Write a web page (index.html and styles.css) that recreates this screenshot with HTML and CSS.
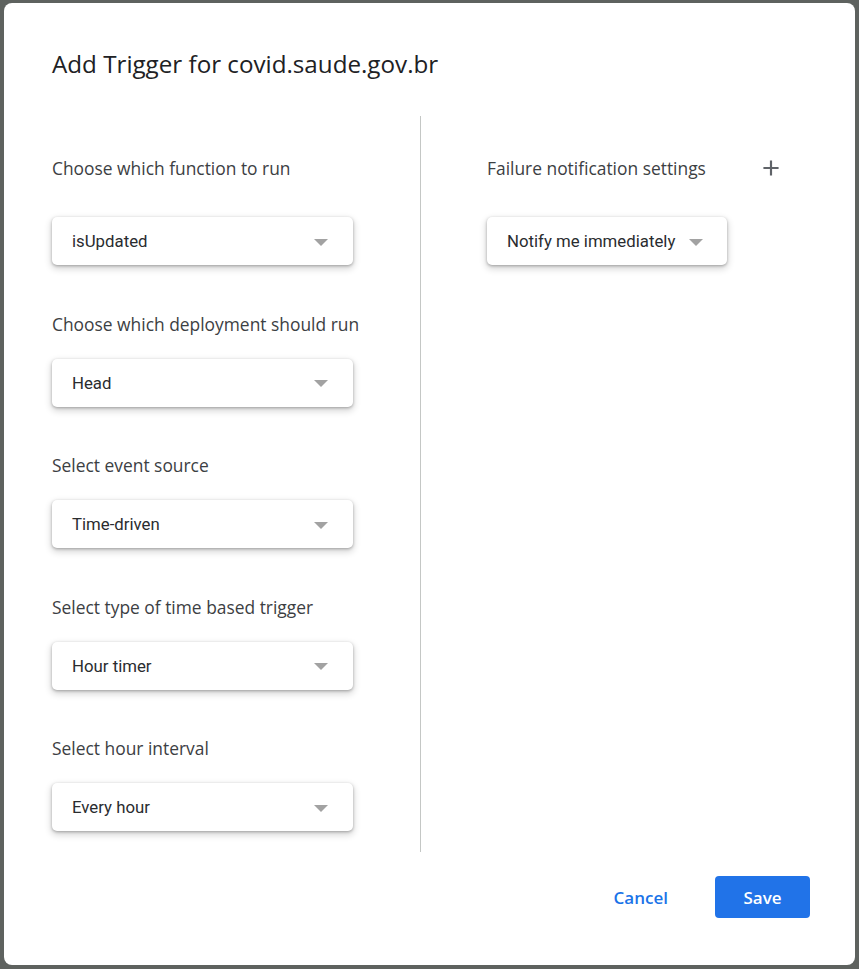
FILE: index.html
```html
<!DOCTYPE html>
<html lang="en">
<head>
<meta charset="utf-8">
<title>Add Trigger</title>
<link rel="stylesheet" href="styles.css">
</head>
<body>
<div class="dialog">
  <h1 class="title">Add Trigger for covid.saude.gov.br</h1>
  <div class="content">
    <div class="col col-left">
      <div class="field field-first">
        <div class="label">Choose which function to run</div>
        <div class="select"><span class="value">isUpdated</span><span class="arrow"></span></div>
      </div>
      <div class="field">
        <div class="label">Choose which deployment should run</div>
        <div class="select"><span class="value">Head</span><span class="arrow"></span></div>
      </div>
      <div class="field">
        <div class="label">Select event source</div>
        <div class="select"><span class="value">Time-driven</span><span class="arrow"></span></div>
      </div>
      <div class="field">
        <div class="label">Select type of time based trigger</div>
        <div class="select"><span class="value">Hour timer</span><span class="arrow"></span></div>
      </div>
      <div class="field">
        <div class="label">Select hour interval</div>
        <div class="select"><span class="value">Every hour</span><span class="arrow"></span></div>
      </div>
    </div>
    <div class="divider"></div>
    <div class="col col-right">
      <div class="field field-first">
        <div class="label-row">
          <div class="label">Failure notification settings</div>
          <span class="add-btn">
            <svg viewBox="0 0 24 24" width="26" height="26"><path d="M19 13h-6v6h-2v-6H5v-2h6V5h2v6h6v2z" fill="#5f6368"/></svg>
          </span>
        </div>
        <div class="select select-auto"><span class="value">Notify me immediately</span><span class="arrow"></span></div>
      </div>
    </div>
  </div>
  <div class="footer">
    <button class="btn btn-text">Cancel</button>
    <button class="btn btn-primary">Save</button>
  </div>
</div>
</body>
</html>
```
FILE: styles.css
```css
html, body {
  margin: 0;
  padding: 0;
}
body {
  background: #5e625f;
  padding: 3px 4px;
  width: 851px;
  height: 963px;
}
.dialog {
  width: 851px;
  height: 962px;
  background: #fff;
  border-radius: 8px;
  box-sizing: border-box;
  padding: 47px 0 0 48px;
  display: flex;
  flex-direction: column;
}
.title {
  margin: 0;
  font-family: "Open Sans", sans-serif;
  font-weight: 400;
  font-size: 24.2px;
  line-height: 28px;
  color: #202124;
}
.content {
  margin-top: 38px;
  display: flex;
  height: 736px;
}
.col-left {
  width: 368px;
  padding-top: 40px;
  display: flex;
  flex-direction: column;
  gap: 46.5px;
}
.divider {
  width: 1px;
  background: #c4c7c5;
}
.col-right {
  flex: 1;
  padding: 40px 64px 0 66px;
}
.field {
  display: flex;
  flex-direction: column;
  align-items: flex-start;
}
.label {
  font-family: "Open Sans", sans-serif;
  font-size: 17.4px;
  line-height: 24px;
  color: #3c4043;
  margin-bottom: 23px;
}
.field-first .label {
  margin-bottom: 37px;
}
.label-row {
  display: flex;
  justify-content: space-between;
  align-items: flex-start;
  align-self: stretch;
  height: 24px;
  margin-bottom: 37px;
}
.label-row .label {
  margin-bottom: 0;
}
.add-btn {
  width: 40px;
  height: 24px;
  display: flex;
  align-items: center;
  justify-content: center;
}
.select {
  width: 301px;
  height: 48px;
  box-sizing: border-box;
  padding: 0 25px 0 20px;
  border-radius: 5px;
  background: #fff;
  box-shadow: 0 1px 3px rgba(0, 0, 0, 0.28), 0 3px 7px 1px rgba(0, 0, 0, 0.16);
  display: flex;
  align-items: center;
  justify-content: space-between;
}
.select-auto {
  width: auto;
  padding: 0 24px 0 20px;
  justify-content: flex-start;
  gap: 14px;
}
.value {
  font-family: Roboto, sans-serif;
  font-size: 16.8px;
  color: #2a2c2f;
}
.arrow {
  width: 0;
  height: 0;
  border-left: 7px solid transparent;
  border-right: 7px solid transparent;
  border-top: 7px solid #a2a2a2;
  margin-top: 2px;
}
.footer {
  margin-top: 24px;
  padding-right: 45px;
  display: flex;
  justify-content: flex-end;
  gap: 31px;
}
.btn {
  height: 42px;
  border: none;
  border-radius: 4px;
  font-family: "Open Sans", sans-serif;
  font-weight: 600;
  font-size: 17px;
  cursor: pointer;
}
.btn-text {
  background: transparent;
  color: #1a73e8;
  padding: 0 16px;
}
.btn-primary {
  background: #2173e8;
  color: #fff;
  width: 95px;
}
```
